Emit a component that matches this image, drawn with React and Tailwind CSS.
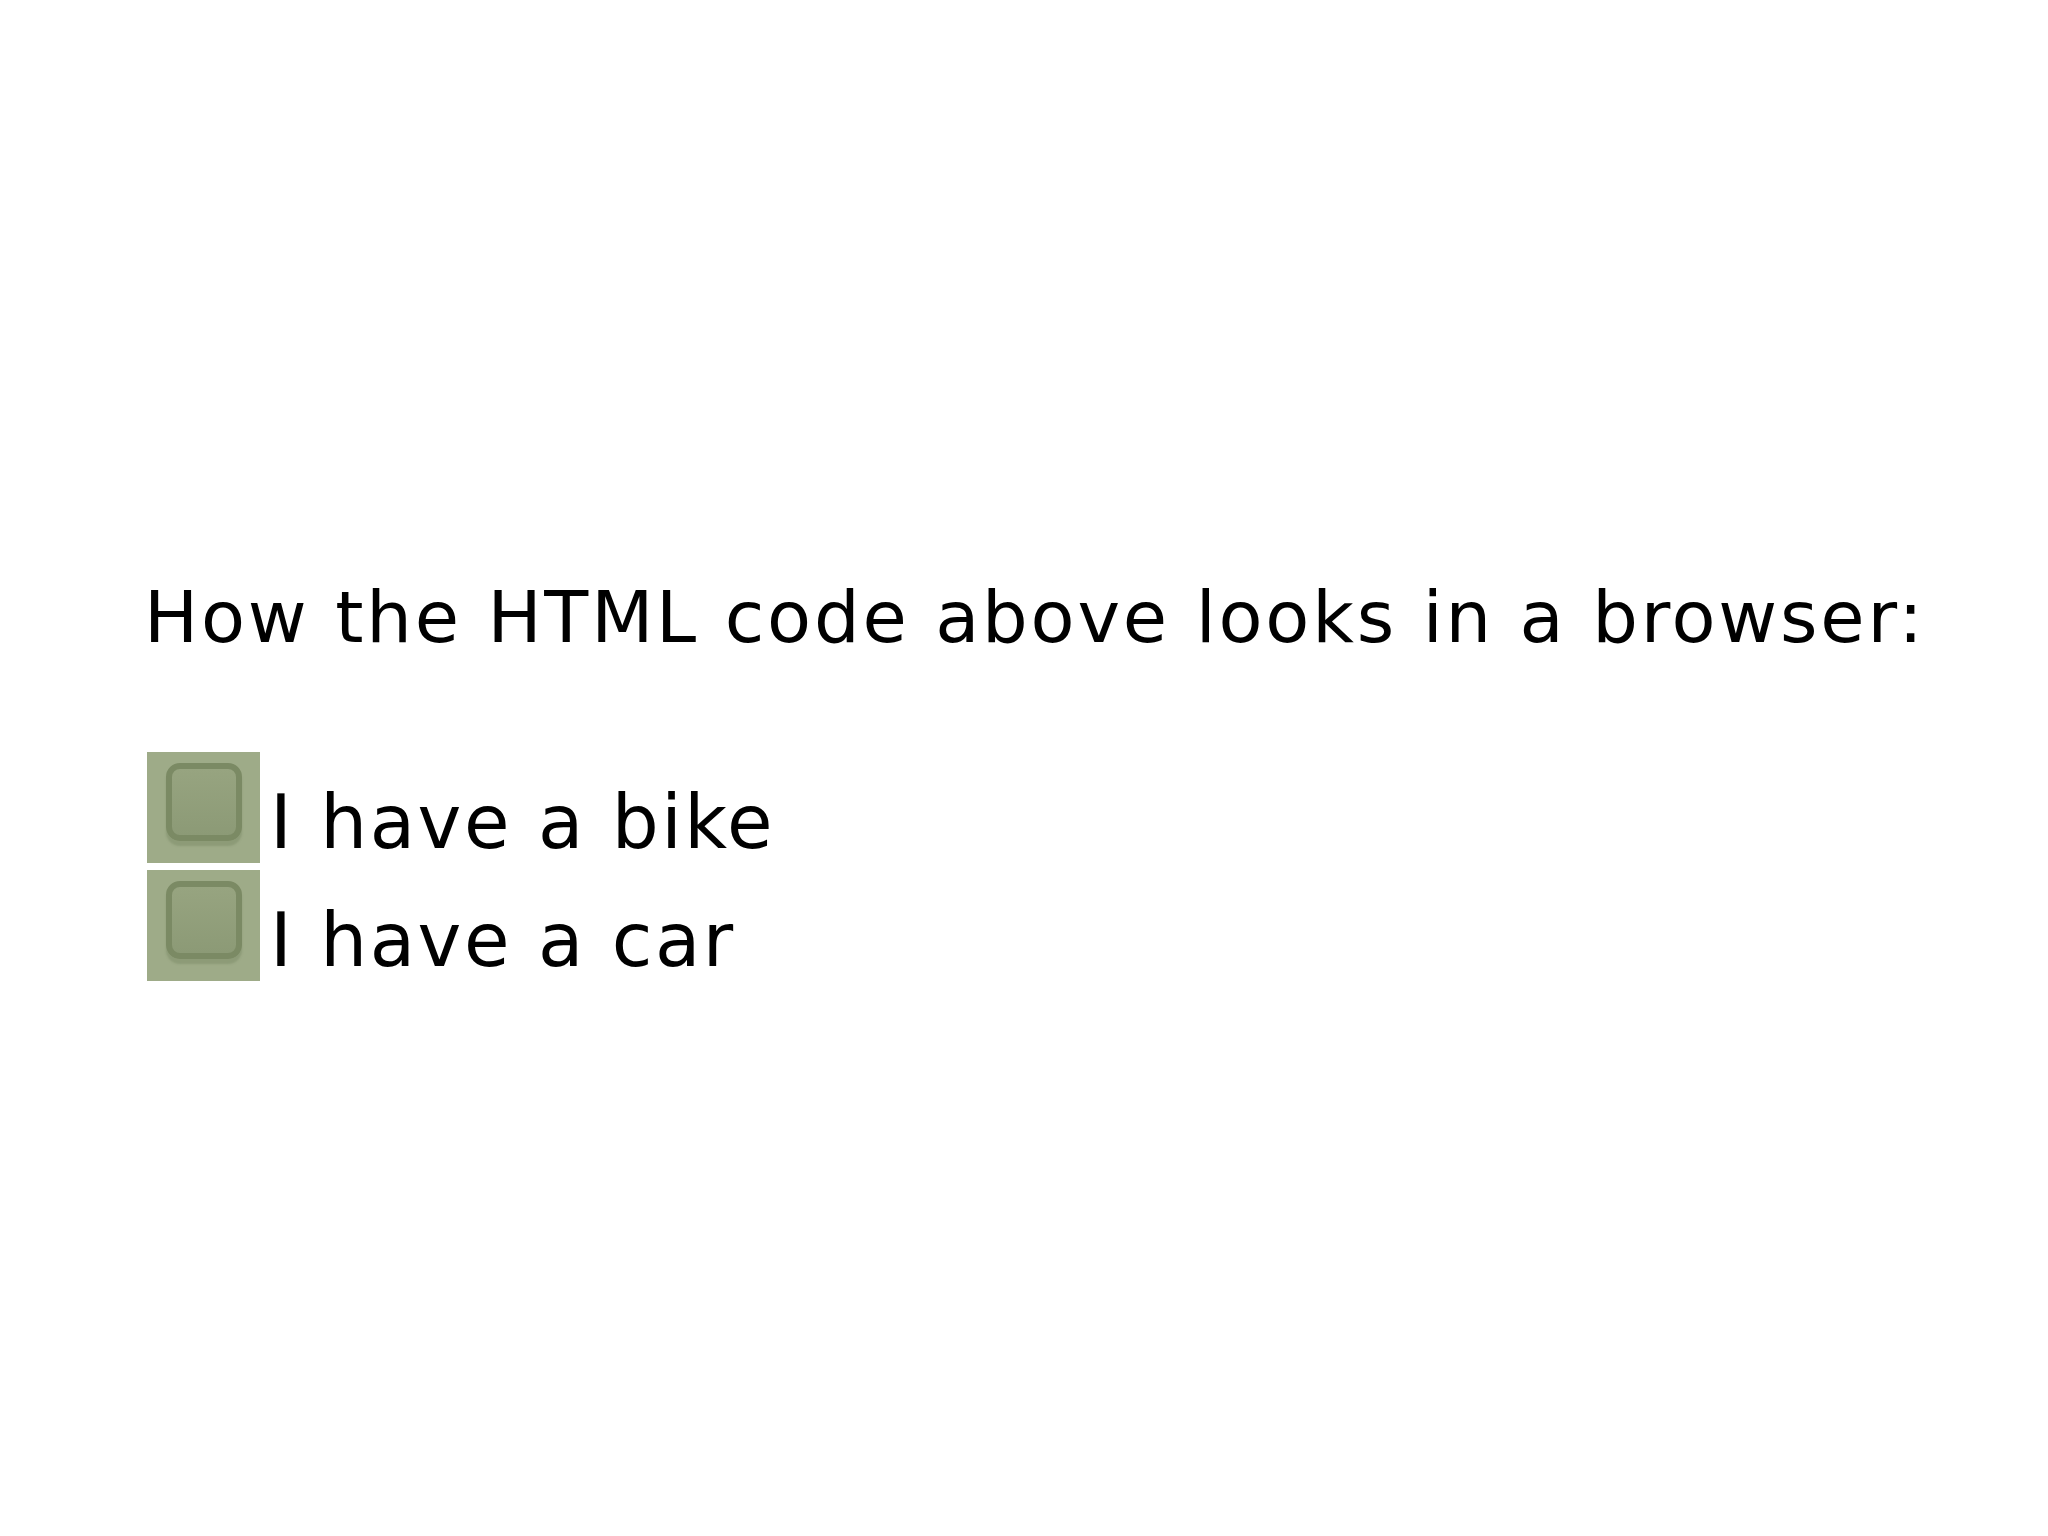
import React from 'react';

const items = ['I have a bike', 'I have a car'];

function FakeCheckbox() {
  return (
    <div className="w-[113px] h-[111px] bg-[#9eab88] pl-[19px] pt-[11px] shrink-0">
      <div className="w-[76px] h-[78px] rounded-[14px] border-[6px] border-[#7b8a64] bg-gradient-to-b from-[#97a480] to-[#8c9a76] shadow-[0_5px_2px_rgba(110,125,90,0.35)]" />
    </div>
  );
}

export default function App() {
  return (
    <div className="min-h-screen bg-white text-black font-['DejaVu_Sans',Verdana,sans-serif]">
      <div className="pl-[144px] pt-[572px]">
        <p className="text-[72px] leading-[90px] tracking-[2.8px]">How the HTML code above looks in a browser:</p>
        <div className="mt-[90px] flex flex-col gap-[7px] pl-[3px]">
          {items.map((label) => (
            <div key={label} className="flex items-end gap-[10px]">
              <FakeCheckbox />
              <span className="text-[74px] leading-[74px] pb-[4px] tracking-[2.5px]">{label}</span>
            </div>
          ))}
        </div>
      </div>
    </div>
  );
}
